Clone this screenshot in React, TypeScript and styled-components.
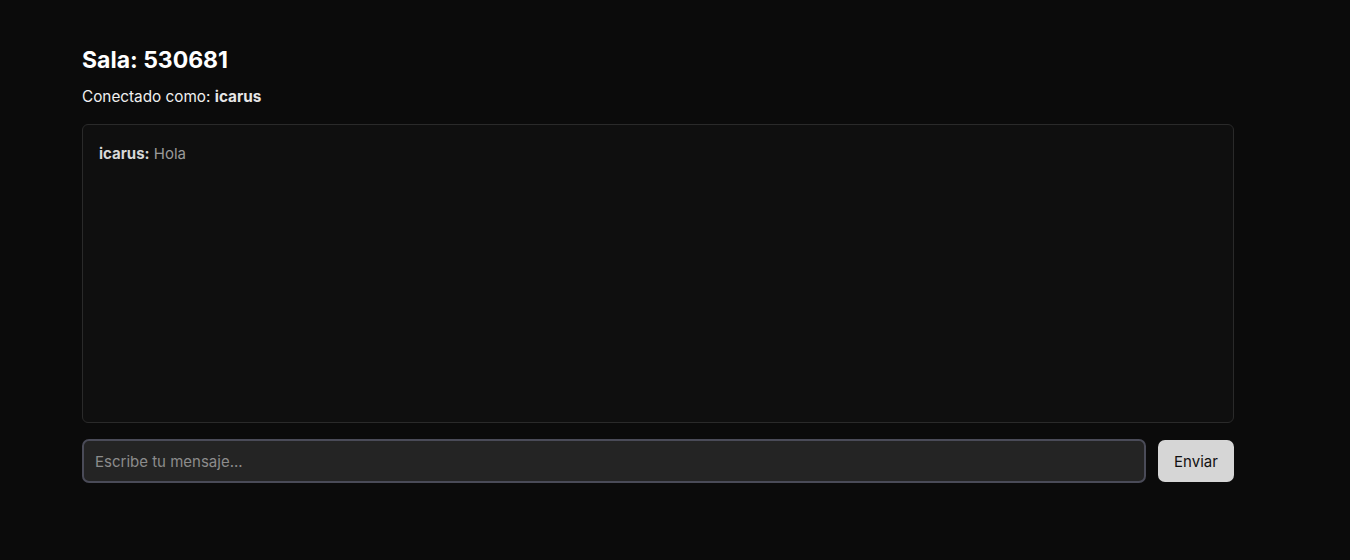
import React, { useState } from 'react';
import styled, { createGlobalStyle } from 'styled-components';

const GlobalStyle = createGlobalStyle`
  html, body {
    margin: 0;
    padding: 0;
    background: #0b0b0b;
    font-family: Inter, "Liberation Sans", sans-serif;
    color: #f2f2f2;
  }
`;

interface Message {
  user: string;
  text: string;
}

const App: React.FC = () => {
  const [messages] = useState<Message[]>([{ user: 'icarus', text: 'Hola' }]);
  const [draft, setDraft] = useState('');

  return (
    <>
      <GlobalStyle />
      <Page>
        <Room>
          <Title>Sala: 530681</Title>
          <Status>
            Conectado como: <strong>icarus</strong>
          </Status>
          <ChatBox>
            {messages.map((m, i) => (
              <Line key={i}>
                <Author>{m.user}:</Author> <Text>{m.text}</Text>
              </Line>
            ))}
          </ChatBox>
          <Composer>
            <Input
              autoFocus
              placeholder="Escribe tu mensaje..."
              value={draft}
              onChange={e => setDraft(e.target.value)}
            />
            <SendButton>Enviar</SendButton>
          </Composer>
        </Room>
      </Page>
    </>
  );
};

const Page = styled.div`
  min-height: 560px;
  padding: 46px 0 0 82px;
  box-sizing: border-box;
`;

const Room = styled.div`
  width: 1152px;
  display: flex;
  flex-direction: column;
`;

const Title = styled.h2`
  margin: 0;
  font-size: 23px;
  line-height: 28px;
  font-weight: 700;
  color: #ffffff;
`;

const Status = styled.p`
  margin: 13px 0 0;
  font-size: 15.3px;
  line-height: 20px;
  color: #f0f0f0;

  strong {
    font-weight: 700;
    color: #e6e6e6;
  }
`;

const ChatBox = styled.div`
  margin-top: 17px;
  height: 299px;
  box-sizing: border-box;
  padding: 18px 16px;
  background: #0f0f0f;
  border: 1px solid #2a2a2a;
  border-radius: 6px;
  overflow-y: auto;
`;

const Line = styled.div`
  font-size: 15px;
  line-height: 22px;
`;

const Author = styled.span`
  font-weight: 700;
  color: #d8d8d8;
`;

const Text = styled.span`
  color: #9a9a9a;
`;

const Composer = styled.div`
  margin-top: 16px;
  display: flex;
  gap: 12px;
  align-items: center;
`;

const Input = styled.input`
  flex: 1;
  height: 44px;
  box-sizing: border-box;
  padding: 0 11px;
  background: #242424;
  border: 2px solid #4a4b58;
  border-radius: 7px;
  color: #e0e0e0;
  font-family: inherit;
  font-size: 15px;
  outline: none;
  caret-color: #ffffff;

  &::placeholder {
    color: #8c8c8c;
  }
`;

const SendButton = styled.button`
  width: 76px;
  height: 42px;
  background: #d6d6d6;
  color: #111111;
  border: none;
  border-radius: 7px;
  font-family: inherit;
  font-size: 15px;
  cursor: pointer;
`;

export default App;
